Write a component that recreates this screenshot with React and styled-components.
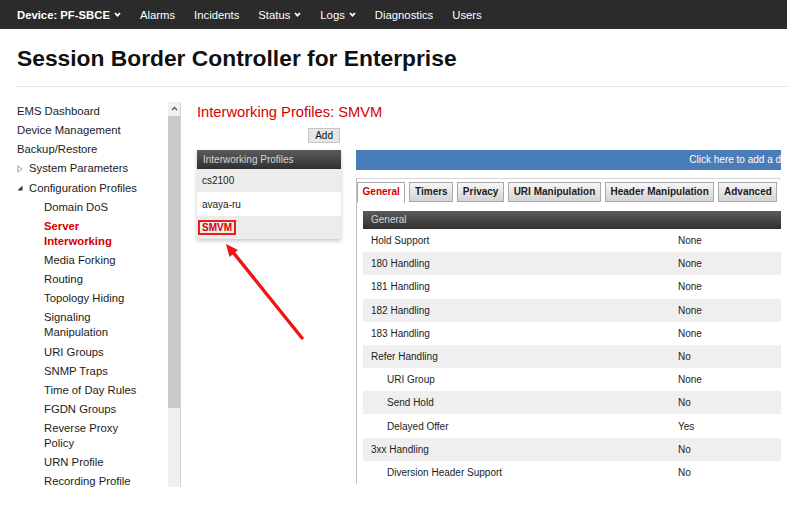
import styled, { createGlobalStyle } from "styled-components";

const GlobalStyle = createGlobalStyle`
  html, body {
    margin: 0;
    padding: 0;
    background: #fff;
  }
  body {
    font-family: "Liberation Sans", Arial, sans-serif;
    color: #1c1c1c;
  }
  * {
    box-sizing: border-box;
  }
`;

const Page = styled.div`
  position: relative;
  width: 787px;
  height: 507px;
  overflow: hidden;
`;

/* ---------- top navigation ---------- */

const TopBar = styled.nav`
  display: flex;
  align-items: center;
  gap: 19px;
  height: 29px;
  padding-left: 17px;
  background: #2b2b2b;
  color: #fff;
  font-size: 11.3px;
`;

const NavItem = styled.span`
  display: flex;
  align-items: center;
  gap: 4px;
  font-weight: ${(p) => (p.$bold ? 700 : 400)};
`;

const Chevron = () => (
  <svg width="7" height="5" viewBox="0 0 7 5">
    <path d="M1 1l2.5 2.6L6 1" fill="none" stroke="#fff" strokeWidth="1.8" />
  </svg>
);

/* ---------- masthead ---------- */

const Masthead = styled.header`
  margin-left: 17px;
  padding: 15.6px 0 15.4px;
  border-bottom: 1px solid #e3e3e3;
`;

const Title = styled.h1`
  margin: 0;
  font-size: 22.8px;
  line-height: 26px;
  font-weight: 700;
  color: #111;
`;

/* ---------- body ---------- */

const Main = styled.div`
  display: flex;
  width: 781px;
  height: 400px;
  padding: 15px 0 0 17px;
  overflow: hidden;
`;

const Sidebar = styled.aside`
  display: flex;
  flex: none;
  width: 164px;
  height: 385px;
  border-right: 1px solid #d4d4d4;
  overflow: hidden;
`;

const Menu = styled.ul`
  width: 128px;
  margin: 0;
  padding: 2px 0 0;
  list-style: none;
  font-size: 11.3px;
  line-height: 15px;
`;

const MenuItem = styled.li`
  display: flex;
  margin-bottom: 4.15px;
  padding-left: ${(p) => (p.$sub ? 27 : 0)}px;
  color: ${(p) => (p.$active ? "#d40000" : "#1c1c1c")};
  font-weight: ${(p) => (p.$active ? 700 : 400)};
`;

const Toggle = styled.span`
  display: flex;
  align-items: center;
  flex: none;
  width: 12px;
`;

const ClosedIcon = () => (
  <svg width="6" height="8" viewBox="0 0 6 8">
    <path d="M0.8 0.8L5 4L0.8 7.2Z" fill="none" stroke="#9a9a9a" strokeWidth="0.9" />
  </svg>
);

const OpenIcon = () => (
  <svg width="6" height="6" viewBox="0 0 6 6">
    <path d="M5.5 0.5V5.5H0.5Z" fill="#333" />
  </svg>
);

const Scrollbar = styled.div`
  display: flex;
  flex-direction: column;
  width: 12px;
  margin-left: auto;
  background: #efefef;
`;

const ScrollButton = styled.div`
  display: flex;
  align-items: center;
  justify-content: center;
  height: 14px;
  background: #f1f1f1;
`;

const ScrollThumb = styled.div`
  height: 292px;
  background: #c9c9c9;
`;

const Content = styled.section`
  flex: 1;
  min-width: 0;
  padding: 1px 0 0 16px;
  overflow: hidden;
`;

const PageTitle = styled.h2`
  margin: 0;
  font-size: 14.7px;
  line-height: 18px;
  font-weight: 400;
  color: #d40000;
`;

const Workspace = styled.div`
  display: grid;
  grid-template-columns: 144px 804px;
  column-gap: 15px;
  row-gap: 7px;
  margin-top: 7px;
`;

const Button = styled.button`
  justify-self: end;
  height: 15px;
  margin-right: 1px;
  padding: 0 6px;
  border: 1px solid #c4c4c4;
  background: #e7e7e7;
  font-family: inherit;
  font-size: 10px;
  line-height: 13px;
  color: #111;
`;

const Spacer = styled.div``;

const ProfileList = styled.div`
  align-self: start;
  box-shadow: 0 2px 4px rgba(0, 0, 0, 0.22);
`;

const DarkHeader = styled.div`
  display: flex;
  align-items: center;
  height: ${(p) => p.$h || 19}px;
  padding-left: ${(p) => p.$pad || 6}px;
  background: linear-gradient(#5b5b5b, #303030);
  color: #d6d6d6;
  font-size: 10px;
`;

const ProfileRow = styled.div`
  display: flex;
  align-items: center;
  height: 23.5px;
  padding-left: 5px;
  background: ${(p) => (p.$shade ? "#ececec" : "#fff")};
  font-size: 10px;
  color: #1c1c1c;
`;

const Selected = styled.span`
  margin-left: -4px;
  padding: 0 2px;
  border: 2px solid #ee1c1c;
  color: #d40000;
  font-weight: 700;
  line-height: 11px;
`;

const DetailPanel = styled.div``;

const InfoBar = styled.div`
  height: 20px;
  background: #4a7cb7;
  color: #fff;
  font-size: 10px;
  line-height: 20px;
  text-align: center;
`;

const TabsBox = styled.div`
  margin-top: 8px;
  padding-top: 3px;
  border-top: 1px solid #d6d6d6;
  border-left: 1px solid #c2c2c2;
`;

const TabList = styled.div`
  display: flex;
  gap: 4px;
  height: 20px;
`;

const Tab = styled.div`
  height: ${(p) => (p.$active ? 21 : 20)}px;
  padding: 0 4.6px;
  border: 1px solid #a9a9a9;
  border-bottom-color: ${(p) => (p.$active ? "#fff" : "#a9a9a9")};
  background: ${(p) => (p.$active ? "#fff" : "linear-gradient(#f7f7f7, #d3d3d3)")};
  color: ${(p) => (p.$active ? "#d40000" : "#1c1c1c")};
  font-size: 10px;
  font-weight: 700;
  line-height: 18px;
  white-space: nowrap;
`;

const TabBody = styled.div`
  padding: 9px 0 0 6px;
`;

const Row = styled.div`
  display: grid;
  grid-template-columns: 307px 1fr;
  align-items: center;
  height: 23.2px;
  background: ${(p) => (p.$shade ? "#efefef" : "#fff")};
  font-size: 10px;
  color: #1c1c1c;
`;

const Cell = styled.span`
  padding-left: ${(p) => (p.$indent ? 24 : 8)}px;
`;

const Annotation = styled.svg`
  position: absolute;
  top: 0;
  left: 0;
  pointer-events: none;
`;

const menu = [
  { label: "EMS Dashboard" },
  { label: "Device Management" },
  { label: "Backup/Restore" },
  { label: "System Parameters", toggle: "closed" },
  { label: "Configuration Profiles", toggle: "open" },
  { label: "Domain DoS", sub: true },
  { label: "Server Interworking", sub: true, active: true },
  { label: "Media Forking", sub: true },
  { label: "Routing", sub: true },
  { label: "Topology Hiding", sub: true },
  { label: "Signaling Manipulation", sub: true },
  { label: "URI Groups", sub: true },
  { label: "SNMP Traps", sub: true },
  { label: "Time of Day Rules", sub: true },
  { label: "FGDN Groups", sub: true },
  { label: "Reverse Proxy Policy", sub: true },
  { label: "URN Profile", sub: true },
  { label: "Recording Profile", sub: true },
];

const tabs = ["General", "Timers", "Privacy", "URI Manipulation", "Header Manipulation", "Advanced"];

const settings = [
  ["Hold Support", "None"],
  ["180 Handling", "None"],
  ["181 Handling", "None"],
  ["182 Handling", "None"],
  ["183 Handling", "None"],
  ["Refer Handling", "No"],
  ["URI Group", "None", true],
  ["Send Hold", "No", true],
  ["Delayed Offer", "Yes", true],
  ["3xx Handling", "No"],
  ["Diversion Header Support", "No", true],
];

export default function App() {
  return (
    <Page>
      <GlobalStyle />
      <TopBar>
        <NavItem $bold>
          Device: PF-SBCE <Chevron />
        </NavItem>
        <NavItem>Alarms</NavItem>
        <NavItem>Incidents</NavItem>
        <NavItem>
          Status <Chevron />
        </NavItem>
        <NavItem>
          Logs <Chevron />
        </NavItem>
        <NavItem>Diagnostics</NavItem>
        <NavItem>Users</NavItem>
      </TopBar>

      <Masthead>
        <Title>Session Border Controller for Enterprise</Title>
      </Masthead>

      <Main>
        <Sidebar>
          <Menu>
            {menu.map((m) => (
              <MenuItem key={m.label} $sub={m.sub} $active={m.active}>
                {m.toggle && <Toggle>{m.toggle === "open" ? <OpenIcon /> : <ClosedIcon />}</Toggle>}
                <span>{m.label}</span>
              </MenuItem>
            ))}
          </Menu>
          <Scrollbar>
            <ScrollButton>
              <svg width="7" height="5" viewBox="0 0 7 5">
                <path d="M1 4l2.5-2.5L6 4" fill="none" stroke="#555" strokeWidth="1.3" />
              </svg>
            </ScrollButton>
            <ScrollThumb />
          </Scrollbar>
        </Sidebar>

        <Content>
          <PageTitle>Interworking Profiles: SMVM</PageTitle>
          <Workspace>
            <Button>Add</Button>
            <Spacer />
            <ProfileList>
              <DarkHeader>Interworking Profiles</DarkHeader>
              <ProfileRow $shade>cs2100</ProfileRow>
              <ProfileRow>avaya-ru</ProfileRow>
              <ProfileRow $shade>
                <Selected>SMVM</Selected>
              </ProfileRow>
            </ProfileList>

            <DetailPanel>
              <InfoBar>Click here to add a description.</InfoBar>
              <TabsBox>
                <TabList>
                  {tabs.map((t, i) => (
                    <Tab key={t} $active={i === 0}>
                      {t}
                    </Tab>
                  ))}
                </TabList>
                <TabBody>
                  <DarkHeader $h={18} $pad={8}>General</DarkHeader>
                  {settings.map(([label, value, indent], i) => (
                    <Row key={label} $shade={i % 2 === 1}>
                      <Cell $indent={indent}>{label}</Cell>
                      <Cell>{value}</Cell>
                    </Row>
                  ))}
                </TabBody>
              </TabsBox>
            </DetailPanel>
          </Workspace>
        </Content>
      </Main>

      <Annotation width="787" height="507" viewBox="0 0 787 507">
        <line x1="302" y1="338" x2="232" y2="251" stroke="#f01414" strokeWidth="3.4" strokeLinecap="round" />
        <polygon points="226,244 238,250 229.5,257" fill="#f01414" />
      </Annotation>
    </Page>
  );
}
